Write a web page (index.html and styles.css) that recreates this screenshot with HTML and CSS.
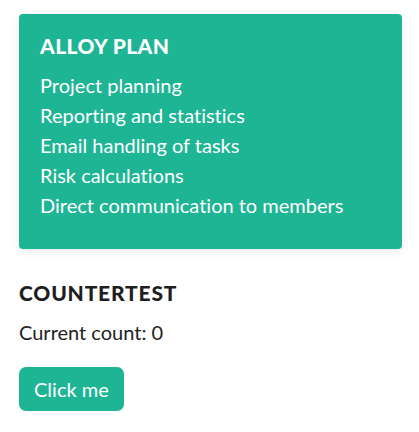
FILE: index.html
```html
<!DOCTYPE html>
<html lang="en">
<head>
  <meta charset="UTF-8" />
  <meta name="viewport" content="width=device-width, initial-scale=1.0"/>
  <title>Alloy Plan</title>
  <link rel="stylesheet" href="styles.css">
</head>
<body>
  <div class="page">
    <div class="plan-card">
      <h2>ALLOY PLAN</h2>
      <ul class="features">
        <li>Project planning</li>
        <li>Reporting and statistics</li>
        <li>Email handling of tasks</li>
        <li>Risk calculations</li>
        <li>Direct communication to members</li>
      </ul>
    </div>

    <div class="counter">
      <h3>COUNTERTEST</h3>
      <p id="count">Current count: 0</p>
      <button id="increment">Click me</button>
    </div>
  </div>

  <script>
    let count = 0;
    const countText = document.getElementById("count");
    document.getElementById("increment").addEventListener("click", () => {
      count++;
      countText.textContent = `Current count: ${count}`;
    });
  </script>
</body>
</html>
```

FILE: styles.css
```css
body {
  margin: 0;
  font-family: Lato, "Open Sans", sans-serif;
  font-variant-ligatures: none;
  color: #222;
  background: #fff;
}

.page {
  padding: 14px 17px 0 19px;
}

.plan-card {
  background: #1db594;
  color: #fff;
  border-radius: 4px;
  padding: 19px 21px 29px;
  box-shadow: 0 3px 10px rgba(0, 0, 0, 0.08);
}

.plan-card h2 {
  margin: 0 0 12px;
  font-size: 21px;
  line-height: 25px;
  font-weight: 900;
  letter-spacing: 0.4px;
}

.features {
  list-style: none;
  margin: 0;
  padding: 0;
}

.features li {
  font-size: 20px;
  line-height: 30px;
}

.counter {
  padding-top: 31px;
}

.counter h3 {
  margin: 0;
  font-size: 21px;
  line-height: 25px;
  font-weight: 900;
  color: #1e1e1e;
  letter-spacing: 0.8px;
}

.counter p {
  margin: 15px 0 23px;
  font-size: 20px;
  line-height: 24px;
}

.counter button {
  background: #1db594;
  color: #fff;
  border: none;
  border-radius: 7px;
  font-family: inherit;
  font-size: 20px;
  line-height: 24px;
  padding: 10px 15px;
  cursor: pointer;
}
```
